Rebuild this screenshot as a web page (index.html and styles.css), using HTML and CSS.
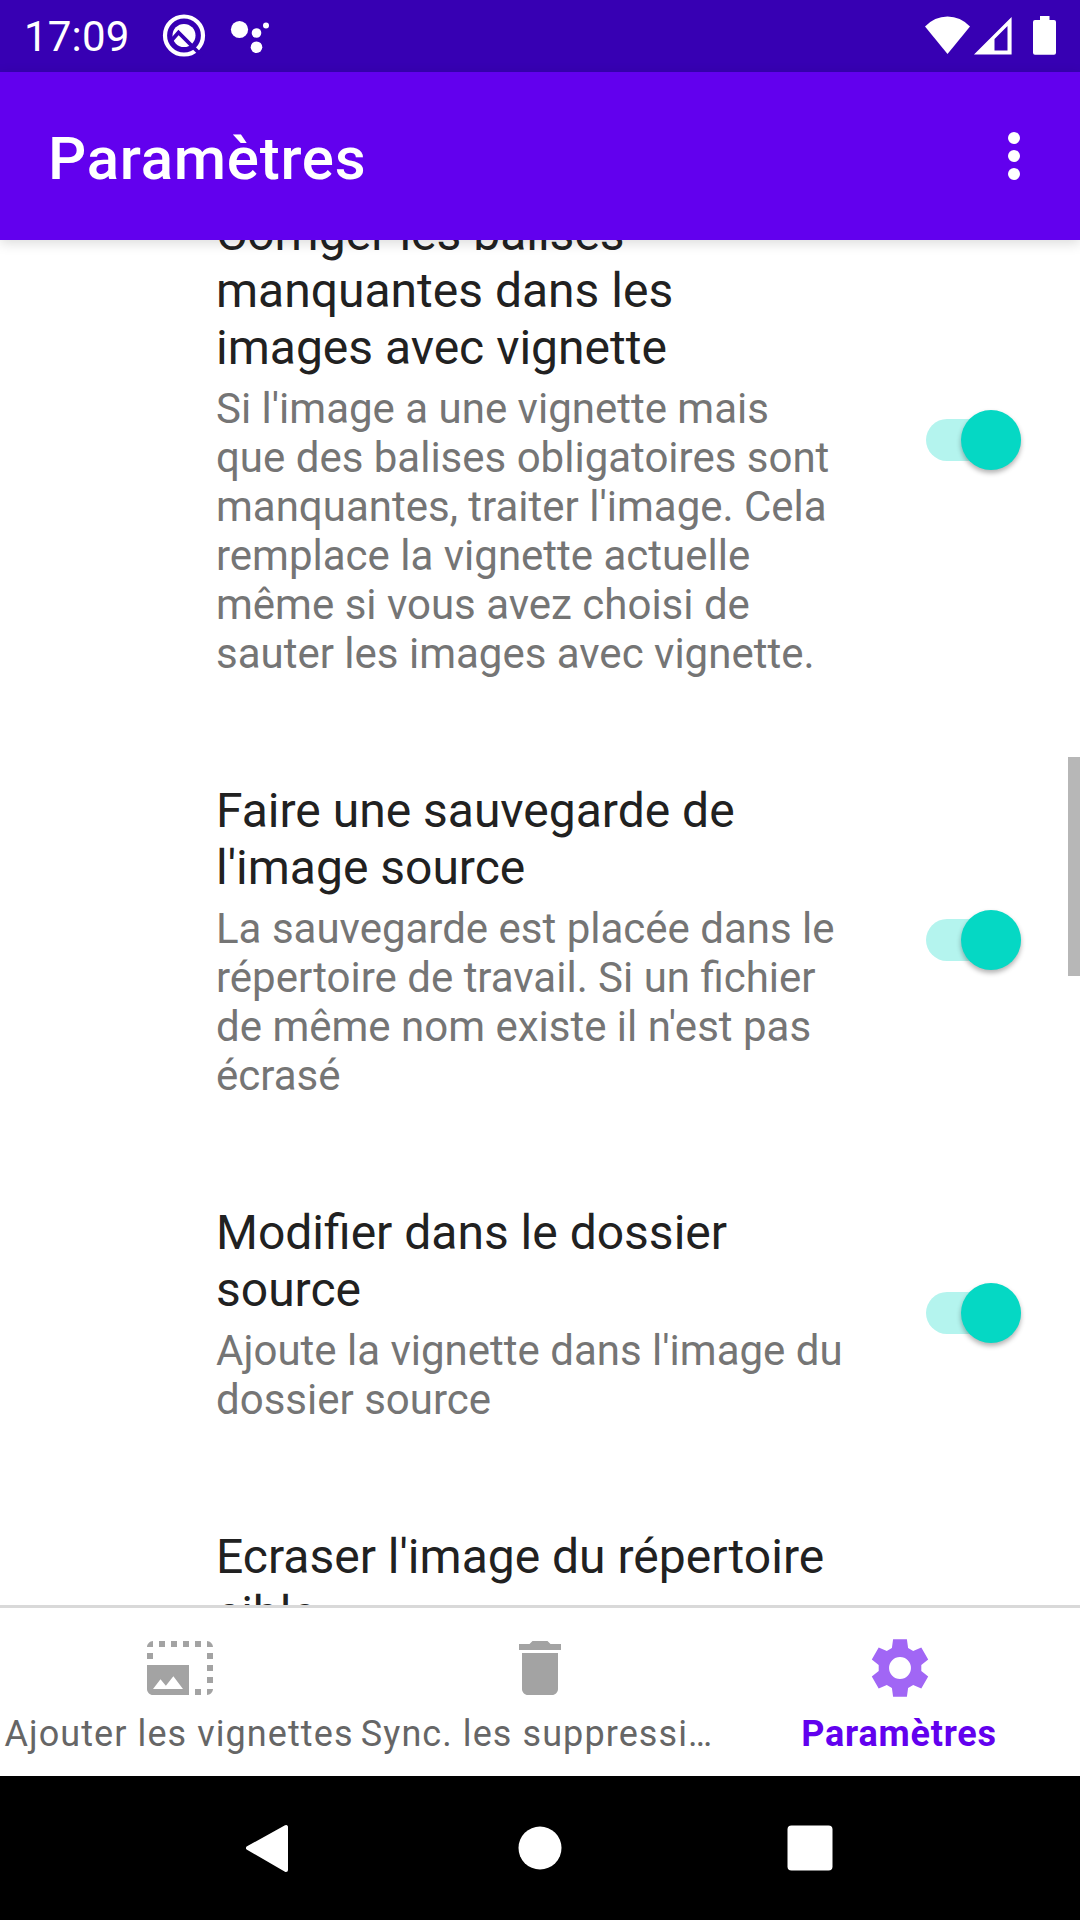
FILE: index.html
```html
<!DOCTYPE html>
<html lang="fr">
<head>
<meta charset="utf-8">
<title>Paramètres</title>
<link rel="stylesheet" href="styles.css">
</head>
<body>
<div class="screen">
  <div class="status-bar">
    <span class="clock">17:09</span>
    <svg class="notif" width="120" height="72" viewBox="0 0 120 72">
      <circle cx="24" cy="35.500" r="19" fill="none" stroke="#fff" stroke-width="4.200"/>
      <circle cx="24" cy="35.500" r="11.500" fill="#fff"/>
      <path d="M11 41l7.500-8.500L42 56" fill="none" stroke="#3700b3" stroke-width="3.800"/>
      <circle cx="79.500" cy="29.500" r="8.600" fill="#fff"/>
      <circle cx="96.500" cy="33" r="4.800" fill="#fff"/>
      <circle cx="106" cy="25.500" r="3" fill="#fff"/>
      <circle cx="96.500" cy="47.200" r="5.800" fill="#fff"/>
    </svg>
    <svg class="system" width="140" height="72" viewBox="920 0 140 72">
      <path d="M925 26.500Q934.500 16.500 947.500 16.500T970 26.500L947.500 54z" fill="#fff"/>
      <path fill="#fff" fill-rule="evenodd" d="M974 54.500L1011.600 17v37.500zM994.500 39v11.500h13V26z"/>
      <path d="M1040 16h9.500v4h4.500q2 0 2 2v30.700q0 2-2 2h-19q-2 0-2-2V22q0-2 2-2h5z" fill="#fff"/>
    </svg>
  </div>
  <header class="app-bar">
    <h1 class="app-title">Paramètres</h1>
    <svg class="overflow" width="12" height="48" viewBox="0 0 12 48">
      <circle cx="6" cy="6" r="6"/><circle cx="6" cy="24" r="6"/><circle cx="6" cy="42" r="6"/>
    </svg>
  </header>
  <main class="settings">
    <div class="list">
      <section class="pref">
        <div class="pref-text">
          <h2 class="pref-title">Corriger les balises<br>manquantes dans les<br>images avec vignette</h2>
          <p class="pref-summary">Si l'image a une vignette mais<br>que des balises obligatoires sont<br>manquantes, traiter l'image. Cela<br>remplace la vignette actuelle<br>même si vous avez choisi de<br>sauter les images avec vignette.</p>
        </div>
        <div class="switch"><span class="thumb"></span></div>
      </section>
      <section class="pref">
        <div class="pref-text">
          <h2 class="pref-title">Faire une sauvegarde de<br>l'image source</h2>
          <p class="pref-summary">La sauvegarde est placée dans le<br>répertoire de travail. Si un fichier<br>de même nom existe il n'est pas<br>écrasé</p>
        </div>
        <div class="switch"><span class="thumb"></span></div>
      </section>
      <section class="pref">
        <div class="pref-text">
          <h2 class="pref-title">Modifier dans le dossier<br>source</h2>
          <p class="pref-summary">Ajoute la vignette dans l'image du<br>dossier source</p>
        </div>
        <div class="switch"><span class="thumb"></span></div>
      </section>
      <section class="pref">
        <div class="pref-text">
          <h2 class="pref-title">Ecraser l'image du répertoire<br>cible</h2>
        </div>
      </section>
    </div>
    <div class="scrollbar"></div>
  </main>
  <nav class="tabs">
    <a class="tab">
      <svg class="tab-icon" width="72" height="72" viewBox="0 0 24 24"><path d="M17 19h2v2h-2zM1 7h2v2H1zM5 3h2v2H5zM9 3h2v2H9zM13 3h2v2h-2zM17 3h2v2h-2zM21 7h2v2h-2zM21 11h2v2h-2zM21 15h2v2h-2zM3 3v2H1c0-1 1-2 2-2zM21 3c1 0 2 1 2 2h-2zM23 19c0 1-1 2-2 2v-2z"/><path fill-rule="evenodd" d="M1 11v8c0 1.100.9 2 2 2h12V11zM3 19l2.500-3.210 1.790 2.150 2.500-3.220L13 19z"/></svg>
      <span class="tab-label">Ajouter les vignettes</span>
    </a>
    <a class="tab">
      <svg class="tab-icon" width="72" height="72" viewBox="0 0 24 24"><path d="M6 19c0 1.100.9 2 2 2h8c1.100 0 2-.9 2-2V7H6zM19 4h-3.500l-1-1h-5l-1 1H5v2h14z"/></svg>
      <span class="tab-label truncated">Sync. les suppressi…</span>
    </a>
    <a class="tab active">
      <svg class="tab-icon" width="72" height="72" viewBox="0 0 24 24"><path fill-rule="evenodd" d="M9.700 2.400h4.600l.4 2.900 1.700 1 2.700-1.100 2.300 4-2.300 1.800v2l2.300 1.800-2.300 4-2.700-1.100-1.700 1-.4 2.900H9.700l-.4-2.900-1.700-1-2.700 1.100-2.300-4L4.900 13v-2L2.600 9.200l2.300-4 2.700 1.100 1.700-1zM12 8.350a3.650 3.650 0 1 0 0 7.300a3.650 3.650 0 1 0 0-7.300z"/></svg>
      <span class="tab-label">Paramètres</span>
    </a>
  </nav>
  <div class="system-nav">
    <svg width="48" height="68" viewBox="246 1814 48 68"><path d="M248 1848L286 1827V1870z" stroke-width="4" stroke-linejoin="round"/></svg>
    <svg width="48" height="48" viewBox="0 0 48 48"><circle cx="24" cy="24" r="21.500"/></svg>
    <svg width="48" height="48" viewBox="0 0 48 48"><rect x="1.500" y="1.500" width="45" height="45" rx="4"/></svg>
  </div>
</div>
</body>
</html>
```
FILE: styles.css
```css
* { box-sizing: border-box; margin: 0; padding: 0; }
body { font-family: Roboto, sans-serif; background: #fff; }
.screen { width: 1080px; height: 1920px; display: flex; flex-direction: column; overflow: hidden; }
.status-bar { height: 72px; flex: none; background: #3700b3; color: #fff; display: flex; align-items: center; padding: 0 20px 0 24px; }
.clock { width: 136px; font-size: 42px; line-height: 72px; padding-top: 2px; letter-spacing: .2px; }
.system { margin-left: auto; }
.app-bar { height: 168px; flex: none; background: #6200ee; color: #fff; display: flex; align-items: center; justify-content: space-between; padding: 0 60px 0 48px; position: relative; box-shadow: 0 3px 12px rgba(0,0,0,.15); }
.app-title { font-size: 60px; font-weight: 500; line-height: 72px; letter-spacing: .75px; padding-top: 5px; }
.overflow { fill: #fff; }
.settings { height: 1365px; flex: none; overflow: hidden; display: flex; justify-content: space-between; }
.list { width: 1040px; margin-top: -35px; }
.pref { display: flex; align-items: center; padding: 0 19px 0 216px; margin-bottom: 104px; }
.pref-text { width: 710px; flex: none; }
.pref-title { font-size: 48px; font-weight: 400; line-height: 57px; color: #212121; white-space: nowrap; }
.pref-summary { font-size: 42px; line-height: 49px; color: #757575; margin-top: 8px; white-space: nowrap; }
.switch { width: 95px; height: 42px; flex: none; margin-bottom: 3px; border-radius: 21px; background: #b4f4ee; display: flex; align-items: center; justify-content: flex-end; }
.thumb { width: 60px; height: 60px; flex: none; border-radius: 50%; background: #05d8c4; box-shadow: 0 3px 5px rgba(0,0,0,.3); }
.scrollbar { width: 12px; height: 219px; margin-top: 517px; background: #b7b7b7; }
.tabs { height: 171px; flex: none; border-top: 3px solid #d9d9d9; background: #fff; display: grid; grid-template-columns: repeat(3, 360px); }
.tab { display: flex; flex-direction: column; align-items: center; padding-top: 24px; color: #666; }
.tab-icon { fill: #a3a3a3; }
.tab-label { margin-top: 9px; padding-right: 2px; font-size: 36px; line-height: 42px; letter-spacing: 1.08px; white-space: nowrap; }
.truncated { padding-right: 6px; }
.active { color: #6200ee; }
.active .tab-icon { fill: #a166f5; }
.active .tab-label { font-weight: 700; letter-spacing: .8px; }
.system-nav { height: 144px; flex: none; background: #000; display: flex; align-items: center; justify-content: space-between; padding: 0 246px; }
.system-nav svg { fill: #fff; stroke: none; }
.system-nav path { stroke: #fff; }
```
